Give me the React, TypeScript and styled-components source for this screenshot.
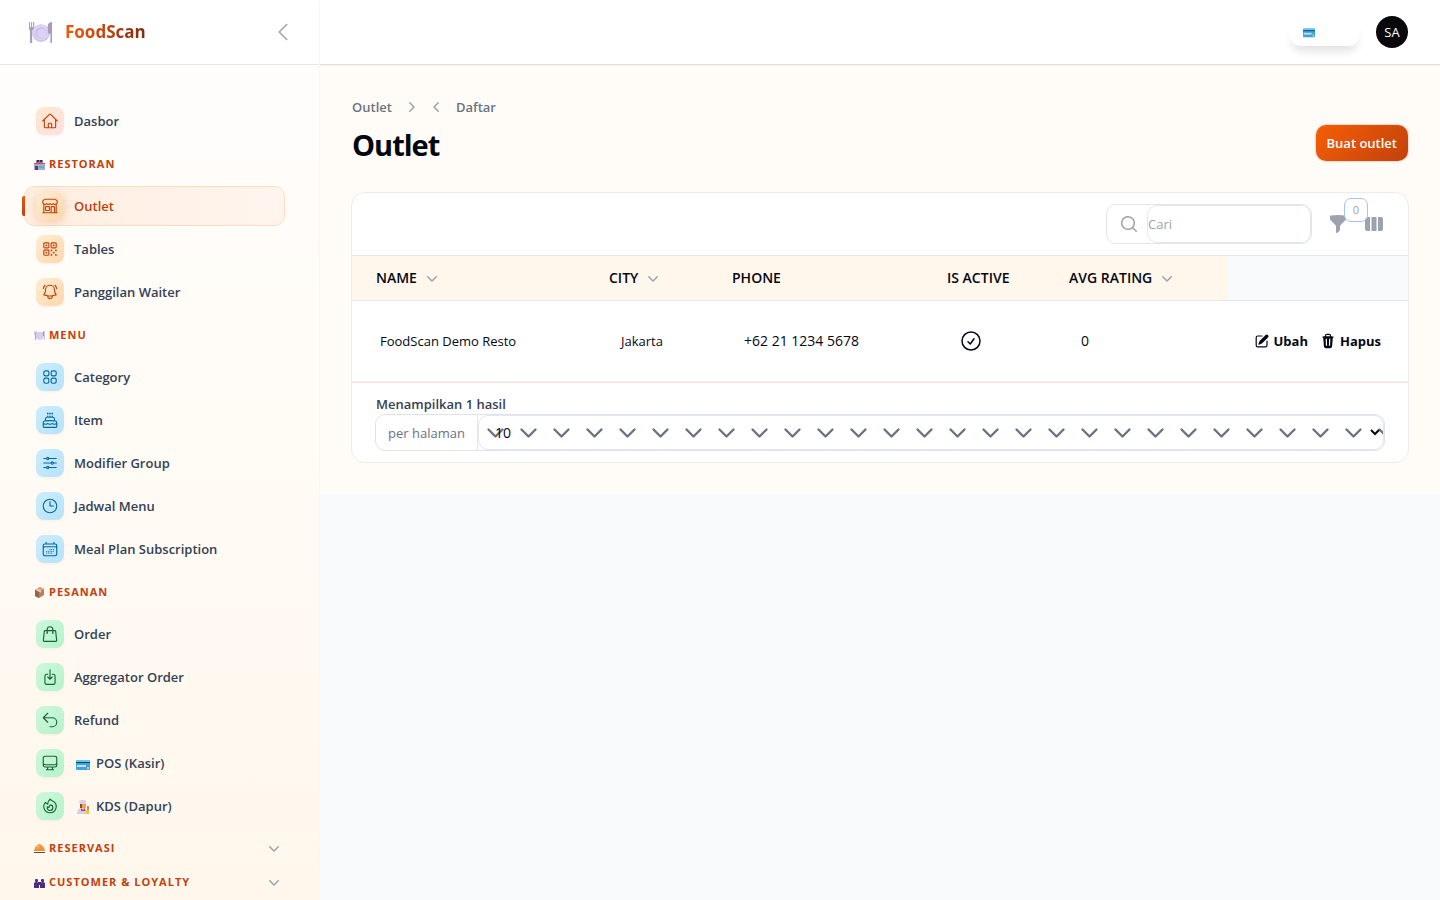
import React from "react";
import styled, { createGlobalStyle, css } from "styled-components";
import {
  HiOutlineHome,
  HiOutlineBuildingStorefront,
  HiOutlineQrCode,
  HiOutlineBellAlert,
  HiOutlineSquares2X2,
  HiOutlineCake,
  HiOutlineAdjustmentsHorizontal,
  HiOutlineClock,
  HiOutlineCalendarDays,
  HiOutlineShoppingBag,
  HiOutlineArrowDownOnSquare,
  HiOutlineArrowUturnLeft,
  HiOutlineComputerDesktop,
  HiOutlineFire,
  HiOutlineChevronLeft,
  HiOutlineCheckCircle,
  HiMiniChevronDown,
  HiMiniChevronLeft,
  HiMiniChevronRight,
  HiMiniMagnifyingGlass,
  HiMiniFunnel,
  HiMiniViewColumns,
  HiMiniPencilSquare,
  HiMiniTrash,
} from "react-icons/hi2";

const GlobalStyle = createGlobalStyle`
  *, *::before, *::after { box-sizing: border-box; }
  body {
    margin: 0;
    background: #f9fafb;
    color: #030712;
    font-family: "Open Sans", "Noto Sans", sans-serif;
    font-size: 13px;
    line-height: 20px;
  }
  button, input, select { font: inherit; color: inherit; }
  button { cursor: pointer; }
  h1, ul, p { margin: 0; padding: 0; }
  svg { display: block; flex: none; }
`;

/* ---------- Emoji drawings ---------- */

const PlateEmoji = ({ size }: { size: number }) => (
  <svg width={size} height={size} viewBox="0 0 24 24" aria-hidden="true">
    <path d="M1 2v6q0 2 1 2v12h2V10q2 0 2-2V2H5v5H4V2H3v5H2V2z" fill="#a79bb5" />
    <circle cx="12.500" cy="12.500" r="8.500" fill="#cdc2ec" />
    <circle cx="12.500" cy="12" r="7.500" fill="#ded5f5" />
    <circle cx="12.500" cy="12.500" r="5.500" fill="#c9bde8" />
    <circle cx="13" cy="13" r="4.500" fill="#dcd2f4" />
    <path d="M21.500 22V13H19V5q1-3 4-3v20z" fill="#a79bb5" />
  </svg>
);

const StoreEmoji = () => (
  <svg width="11" height="11" viewBox="0 0 11 11" aria-hidden="true">
    <rect x="2" y="1" width="7" height="4" fill="#857f9c" />
    <rect x="3" y="1" width="2" height="2" fill="#33304c" />
    <rect x="6" y="1" width="2" height="2" fill="#33304c" />
    <rect x="0" y="4" width="11" height="7" fill="#b3a8bd" />
    <rect x="0" y="4" width="11" height="1" fill="#d4476d" />
    <rect x="1" y="7" width="3" height="4" fill="#3a4a86" />
    <rect x="5" y="7" width="5" height="2" fill="#39bdf0" />
  </svg>
);

const BoxEmoji = () => (
  <svg width="11" height="11" viewBox="0 0 11 11" aria-hidden="true">
    <path d="M1 3l5-3 4 2v6l-5 3-4-2z" fill="#b87f5a" />
    <path d="M1 3l5-3 4 2-5 3z" fill="#d9a883" />
    <path d="M1 3l4 2v6L1 9z" fill="#94644e" />
    <path d="M3 2l4 2v2L6 5 2 3z" fill="#e9d3c5" />
  </svg>
);

const CardEmoji = ({ size = 14 }: { size?: number }) => (
  <svg width={size} height={size} viewBox="0 0 14 14" aria-hidden="true">
    <rect x="0" y="3" width="14" height="10" rx="1" fill="#35a8e4" />
    <rect x="0" y="3" width="14" height="2" fill="#5cc8f4" />
    <rect x="0" y="5" width="14" height="1" fill="#243a52" />
    <rect x="1" y="8" width="9" height="2" fill="#d5dbe8" />
    <rect x="11" y="10" width="2" height="2" fill="#f7c843" />
  </svg>
);

const CookEmoji = () => (
  <svg width="14" height="14" viewBox="0 0 14 14" aria-hidden="true">
    <path d="M3 2q0-2 3-2h2q3 0 2 3v2H4z" fill="#dccfe6" />
    <path d="M4 4h6v4H4z" fill="#f4a63a" />
    <path d="M4 4h2v4H4z" fill="#8a4b3c" />
    <path d="M1 14q0-5 4-6h3q3 1 3 6z" fill="#d7cbea" />
    <path d="M5 8l2 2 2-2v3H5z" fill="#d2365c" />
    <rect x="11" y="6" width="2" height="4" fill="#b98d78" />
    <rect x="10" y="10" width="3" height="4" fill="#f9c433" />
  </svg>
);

const BellhopEmoji = () => (
  <svg width="11" height="11" viewBox="0 0 11 11" aria-hidden="true">
    <path d="M0 8q1-5 4-6l1-1h1l1 1q3 1 4 6z" fill="#f59331" />
    <path d="M3 6q0-3 3-3" stroke="#ffc870" fill="none" />
    <rect x="0" y="9" width="11" height="1" fill="#6b4652" />
  </svg>
);

const PeopleEmoji = () => (
  <svg width="11" height="11" viewBox="0 0 11 11" aria-hidden="true">
    <rect x="1" y="2" width="3" height="3" rx="1" fill="#4b2e83" />
    <rect x="7" y="2" width="3" height="3" rx="1" fill="#4b2e83" />
    <path d="M0 11V6q2-2 5 0h1q3-2 5 0v5H6V8H5v3z" fill="#4b2e83" />
    <rect x="4" y="5" width="3" height="2" fill="#4b2e83" />
  </svg>
);

/* ---------- Shell ---------- */

const Shell = styled.div`
  display: flex;
  align-items: flex-start;
`;

const Sidebar = styled.aside`
  flex: none;
  width: 320px;
  height: 100vh;
  overflow: hidden;
  background: linear-gradient(180deg, #fffefd 0%, #fffbf5 50%, #fff7ec 100%);
  border-right: 1px solid #fdf6ec;
`;

const SidebarHeader = styled.header`
  display: flex;
  align-items: center;
  justify-content: space-between;
  height: 65px;
  padding: 0 24px 0 28px;
  background: #fff;
  border-bottom: 1px solid #e6e7ea;
`;

const Brand = styled.a`
  display: flex;
  align-items: center;
  gap: 12px;
  font-size: 17px;
  line-height: 28px;
  font-weight: 700;
  text-decoration: none;
  color: #c2410c;
`;

const BrandName = styled.span`
  background: linear-gradient(90deg, #f55a05, #c2410c 50%, #7c2d12);
  background-clip: text;
  color: transparent;
`;

const PlainButton = styled.button`
  display: flex;
  align-items: center;
  justify-content: center;
  padding: 0;
  border: 0;
  background: none;
  color: #9ca3af;
`;

const Nav = styled.nav`
  padding: 36px 34px 0 24px;
`;

const NavList = styled.ul`
  display: flex;
  flex-direction: column;
  gap: 3px;
  list-style: none;
`;

type Tone = "home" | "orange" | "blue" | "green";

const tones: Record<Tone, ReturnType<typeof css>> = {
  home: css`
    background: linear-gradient(135deg, #ffe8cf, #ffdfdf);
    color: #c2410c;
  `,
  orange: css`
    background: linear-gradient(135deg, #ffedd5, #fed7aa);
    color: #c2410c;
  `,
  blue: css`
    background: linear-gradient(135deg, #cdecfd, #b6e3fb);
    color: #0369a1;
  `,
  green: css`
    background: linear-gradient(135deg, #cdf8dc, #b6f2cb);
    color: #166534;
  `,
};

const IconTile = styled.span<{ $tone: Tone; $active?: boolean }>`
  display: flex;
  align-items: center;
  justify-content: center;
  width: 28px;
  height: 28px;
  border-radius: 8px;
  box-shadow: ${(p) =>
    p.$active ? "0 2px 8px rgba(234, 88, 12, 0.25)" : "0 1px 2px rgba(234, 88, 12, 0.08)"};
  ${(p) => tones[p.$tone]}
`;

const NavLink = styled.a<{ $active?: boolean }>`
  position: relative;
  display: flex;
  align-items: center;
  gap: 10px;
  height: 40px;
  padding: 0 11px;
  border: 1px solid ${(p) => (p.$active ? "#fddcc0" : "transparent")};
  border-radius: 10px;
  background: ${(p) => (p.$active ? "linear-gradient(90deg, #ffeee0, #fff5ee)" : "none")};
  color: ${(p) => (p.$active ? "#c2410c" : "#334155")};
  font-weight: 600;
  text-decoration: none;

  &::before {
    content: "";
    display: ${(p) => (p.$active ? "block" : "none")};
    position: absolute;
    left: -3px;
    top: 9px;
    width: 3px;
    height: 20px;
    border-radius: 2px 0 0 2px;
    background: linear-gradient(180deg, #ea580c, #c2410c);
  }
`;

const NavText = styled.span`
  display: flex;
  align-items: center;
  gap: 6px;
`;

const EmojiSlot = styled.span`
  padding: 1px 0 0 2px;
`;

const GroupButton = styled.button<{ $collapsed?: boolean }>`
  display: flex;
  align-items: center;
  width: 100%;
  height: 34px;
  margin: ${(p) => (p.$collapsed ? "0" : "6px 0 5px")};
  padding: 0 1px 0 10px;
  border: 0;
  background: none;
  color: #c2410c;
  font-size: 11px;
  line-height: 16px;
  font-weight: 700;
  letter-spacing: 1px;
  text-transform: uppercase;
`;

const CollapsedGroups = styled.div`
  padding-top: 5px;
`;

const GroupLabel = styled.span`
  flex: 1;
  padding-left: 4px;
  text-align: left;
`;

const MutedIcon = styled.span`
  color: #9ca3af;
`;

interface NavEntry {
  label: string;
  icon: React.ComponentType<{ size?: number }>;
  emoji?: React.ReactNode;
  active?: boolean;
}

interface NavGroup {
  title: string;
  emoji: React.ReactNode;
  tone: Tone;
  items: NavEntry[];
}

const groups: NavGroup[] = [
  {
    title: "Restoran",
    emoji: <StoreEmoji />,
    tone: "orange",
    items: [
      { label: "Outlet", icon: HiOutlineBuildingStorefront, active: true },
      { label: "Tables", icon: HiOutlineQrCode },
      { label: "Panggilan Waiter", icon: HiOutlineBellAlert },
    ],
  },
  {
    title: "Menu",
    emoji: <PlateEmoji size={11} />,
    tone: "blue",
    items: [
      { label: "Category", icon: HiOutlineSquares2X2 },
      { label: "Item", icon: HiOutlineCake },
      { label: "Modifier Group", icon: HiOutlineAdjustmentsHorizontal },
      { label: "Jadwal Menu", icon: HiOutlineClock },
      { label: "Meal Plan Subscription", icon: HiOutlineCalendarDays },
    ],
  },
  {
    title: "Pesanan",
    emoji: <BoxEmoji />,
    tone: "green",
    items: [
      { label: "Order", icon: HiOutlineShoppingBag },
      { label: "Aggregator Order", icon: HiOutlineArrowDownOnSquare },
      { label: "Refund", icon: HiOutlineArrowUturnLeft },
      { label: "POS (Kasir)", icon: HiOutlineComputerDesktop, emoji: <CardEmoji /> },
      { label: "KDS (Dapur)", icon: HiOutlineFire, emoji: <CookEmoji /> },
    ],
  },
];

const collapsedGroups = [
  { title: "Reservasi", emoji: <BellhopEmoji /> },
  { title: "Customer & Loyalty", emoji: <PeopleEmoji /> },
];

function NavItem({ entry, tone }: { entry: NavEntry; tone: Tone }) {
  const Icon = entry.icon;
  return (
    <li>
      <NavLink href="#" $active={entry.active} aria-current={entry.active ? "page" : undefined}>
        <IconTile $tone={tone} $active={entry.active}>
          <Icon size={18} />
        </IconTile>
        <NavText>
          {entry.emoji && <EmojiSlot>{entry.emoji}</EmojiSlot>}
          {entry.label}
        </NavText>
      </NavLink>
    </li>
  );
}

/* ---------- Content ---------- */

const Page = styled.div`
  flex: 1;
  min-width: 0;
`;

const Topbar = styled.header`
  position: relative;
  display: flex;
  align-items: center;
  justify-content: flex-end;
  gap: 16px;
  height: 65px;
  padding: 0 32px;
  background: #fff;
  border-bottom: 1px solid #ecdcd2;
  box-shadow: 0 1px 1px rgba(0, 0, 0, 0.04);
`;

const PosButton = styled.button`
  display: flex;
  align-items: center;
  width: 71px;
  height: 28px;
  padding: 0 14px;
  border: 0;
  border-radius: 12px;
  background: #fff;
  box-shadow: 0 8px 10px -3px rgba(0, 0, 0, 0.12);
`;

const Avatar = styled.button`
  width: 32px;
  height: 32px;
  padding: 0;
  border: 0;
  border-radius: 50%;
  background: #09090b;
  color: #fff;
`;

const Main = styled.main`
  padding: 32px 32px 30px;
  background: #fffcf7;
`;

const PageHeader = styled.div`
  display: flex;
  align-items: flex-end;
  justify-content: space-between;
  margin-bottom: 29px;
`;

const Breadcrumb = styled.nav`
  display: flex;
  align-items: center;
  gap: 9px;
  margin-bottom: 10px;
  color: #9ca3af;
`;

const CrumbLink = styled.a`
  color: #6b7280;
  font-weight: 600;
  text-decoration: none;
`;

const Chevrons = styled.span`
  display: flex;
  gap: 6px;
`;

const Title = styled.h1`
  font-size: 29px;
  line-height: 36px;
  font-weight: 700;
  letter-spacing: -1px;
`;

const PrimaryButton = styled.button`
  height: 36px;
  margin-bottom: 2px;
  padding: 0 11px;
  border: 0;
  border-radius: 10px;
  background: linear-gradient(135deg, #f55f05, #c2410c);
  box-shadow: 0 0 2px rgba(194, 65, 12, 0.6);
  color: #fff;
  font-weight: 600;
`;

const Card = styled.section`
  border: 1px solid #ececec;
  border-radius: 14px;
  background: #fff;
  margin: 0 -1px;
`;

const Toolbar = styled.div`
  display: flex;
  align-items: center;
  justify-content: flex-end;
  gap: 16px;
  height: 62px;
  padding: 0 24px;
`;

const SearchBox = styled.label`
  display: flex;
  align-items: center;
  width: 206px;
  height: 40px;
  padding: 0 0 0 12px;
  border: 1px solid #e2e5ea;
  border-radius: 10px;
  color: #9ca3af;
`;

const SearchInput = styled.input`
  flex: 1;
  min-width: 0;
  height: 38px;
  margin-left: 8px;
  padding: 0;
  border: 1px solid #e2e8f0;
  border-radius: 10px;
  background: #fff;
  outline: 0;

  &::placeholder {
    color: #9ca3af;
    opacity: 1;
  }
`;

const FilterButton = styled(PlainButton)`
  position: relative;
  width: 20px;
  height: 20px;
`;

const FilterCount = styled.span`
  position: absolute;
  left: 16px;
  top: -16px;
  width: 24px;
  height: 24px;
  border: 1px solid #a3c4fb;
  border-radius: 7px;
  background: #fff;
  font-size: 11px;
  line-height: 22px;
  text-align: center;
`;

const DataTable = styled.table`
  width: 100%;
  table-layout: fixed;
  border-collapse: separate;
  border-spacing: 0;
`;

const HeadCell = styled.th<{ $plain?: boolean }>`
  height: 46px;
  padding: 0 12px;
  border-top: 1px solid #e5e7eb;
  border-bottom: 1px solid #e5e7eb;
  background: ${(p) => (p.$plain ? "#f8fafc" : "#fff7eb")};
  font-size: 14px;
  font-weight: 600;
  text-align: left;
  text-transform: uppercase;
  white-space: nowrap;

  &:first-child {
    padding-left: 24px;
  }
`;

const SortButton = styled.button`
  display: flex;
  align-items: center;
  gap: 5px;
  padding: 0;
  border: 0;
  background: none;
  font-weight: 600;
  text-transform: uppercase;
`;

const Cell = styled.td<{ $numeric?: boolean }>`
  height: 81px;
  padding: 0 24px;
  border-bottom: 1px solid #fdf0e2;
  font-size: ${(p) => (p.$numeric ? "14px" : "13px")};
  white-space: nowrap;

  &:first-child {
    padding-left: 28px;
  }
`;

const RowActions = styled.div`
  display: flex;
  justify-content: flex-end;
  gap: 12px;
  padding-right: 3px;
`;

const ActionLink = styled.button`
  display: flex;
  align-items: center;
  gap: 4px;
  padding: 0;
  border: 0;
  background: none;
  font-weight: 700;
`;

const Footer = styled.div`
  padding: 11px 23px;
  border-top: 1px solid #e5e7eb;
`;

const Summary = styled.p`
  color: #374151;
  font-weight: 600;
  padding-left: 1px;
`;

const PerPage = styled.div`
  display: flex;
  height: 37px;
  border: 1px solid #e0e3e8;
  border-radius: 10px;
`;

const PerPageLabel = styled.label`
  display: flex;
  align-items: center;
  padding: 0 12px;
  border-right: 1px solid #e5e7eb;
  color: #6b7280;
`;

const chevronTile =
  "url(\"data:image/svg+xml,%3Csvg xmlns='http://www.w3.org/2000/svg' width='33' height='24' viewBox='0 0 33 24'%3E%3Cpath d='M9.500 8.500l7 7 7-7' fill='none' stroke='%236b7280' stroke-width='2.400' stroke-linecap='round' stroke-linejoin='round'/%3E%3C/svg%3E\")";

const PerPageSelect = styled.select`
  flex: 1;
  min-width: 0;
  padding: 0 0 0 12px;
  border: 1px solid #e2e8f0;
  border-radius: 10px;
  background: #fff ${chevronTile} 0 50% repeat-x;
  font-size: 14px;
  outline: 0;
`;

const columns = [
  { title: "Name", width: 245, sortable: true },
  { title: "City", width: 123, sortable: true },
  { title: "Phone", width: 215 },
  { title: "Is Active", width: 122 },
  { title: "Avg Rating", width: 171, sortable: true },
  { title: "", width: 180 },
];

export default function App() {
  return (
    <>
      <GlobalStyle />
      <Shell>
        <Sidebar>
          <SidebarHeader>
            <Brand href="#">
              <PlateEmoji size={25} />
              <BrandName>FoodScan</BrandName>
            </Brand>
            <PlainButton type="button" aria-label="Collapse sidebar">
              <HiOutlineChevronLeft size={24} />
            </PlainButton>
          </SidebarHeader>
          <Nav aria-label="Sidebar">
            <NavList>
              <NavItem entry={{ label: "Dasbor", icon: HiOutlineHome }} tone="home" />
            </NavList>
            {groups.map((group) => (
              <React.Fragment key={group.title}>
                <GroupButton type="button" aria-expanded="true">
                  {group.emoji}
                  <GroupLabel>{group.title}</GroupLabel>
                </GroupButton>
                <NavList>
                  {group.items.map((entry) => (
                    <NavItem key={entry.label} entry={entry} tone={group.tone} />
                  ))}
                </NavList>
              </React.Fragment>
            ))}
            <CollapsedGroups>
              {collapsedGroups.map((group) => (
                <GroupButton key={group.title} type="button" aria-expanded="false" $collapsed>
                  {group.emoji}
                  <GroupLabel>{group.title}</GroupLabel>
                  <MutedIcon>
                    <HiMiniChevronDown size={20} />
                  </MutedIcon>
                </GroupButton>
              ))}
            </CollapsedGroups>
          </Nav>
        </Sidebar>

        <Page>
          <Topbar>
            <PosButton type="button" aria-label="POS">
              <CardEmoji size={12} />
            </PosButton>
            <Avatar type="button">SA</Avatar>
          </Topbar>
          <Main>
            <PageHeader>
              <div>
                <Breadcrumb aria-label="Breadcrumb">
                  <CrumbLink href="#">Outlet</CrumbLink>
                  <Chevrons>
                    <HiMiniChevronRight size={20} />
                    <HiMiniChevronLeft size={20} />
                  </Chevrons>
                  <CrumbLink href="#">Daftar</CrumbLink>
                </Breadcrumb>
                <Title>Outlet</Title>
              </div>
              <PrimaryButton type="button">Buat outlet</PrimaryButton>
            </PageHeader>

            <Card>
              <Toolbar>
                <SearchBox>
                  <HiMiniMagnifyingGlass size={20} />
                  <SearchInput type="search" placeholder="Cari" aria-label="Cari" />
                </SearchBox>
                <FilterButton type="button" aria-label="Filter">
                  <HiMiniFunnel size={20} />
                  <FilterCount>0</FilterCount>
                </FilterButton>
                <PlainButton type="button" aria-label="Columns">
                  <HiMiniViewColumns size={20} />
                </PlainButton>
              </Toolbar>
              <DataTable>
                <colgroup>
                  {columns.map((c) => (
                    <col key={c.title} width={c.width} />
                  ))}
                </colgroup>
                <thead>
                  <tr>
                    {columns.map((c) => (
                      <HeadCell key={c.title} scope="col" $plain={!c.title}>
                        {c.sortable ? (
                          <SortButton type="button">
                            {c.title}
                            <MutedIcon>
                              <HiMiniChevronDown size={20} />
                            </MutedIcon>
                          </SortButton>
                        ) : (
                          c.title
                        )}
                      </HeadCell>
                    ))}
                  </tr>
                </thead>
                <tbody>
                  <tr>
                    <Cell>FoodScan Demo Resto</Cell>
                    <Cell>Jakarta</Cell>
                    <Cell $numeric>+62 21 1234 5678</Cell>
                    <Cell>
                      <HiOutlineCheckCircle size={24} aria-label="Active" />
                    </Cell>
                    <Cell $numeric>0</Cell>
                    <Cell>
                      <RowActions>
                        <ActionLink type="button">
                          <HiMiniPencilSquare size={16} />
                          Ubah
                        </ActionLink>
                        <ActionLink type="button">
                          <HiMiniTrash size={16} />
                          Hapus
                        </ActionLink>
                      </RowActions>
                    </Cell>
                  </tr>
                </tbody>
              </DataTable>
              <Footer>
                <Summary>Menampilkan 1 hasil</Summary>
                <PerPage>
                  <PerPageLabel htmlFor="per-page">per halaman</PerPageLabel>
                  <PerPageSelect id="per-page" defaultValue="10">
                    <option>5</option>
                    <option>10</option>
                    <option>25</option>
                    <option>50</option>
                  </PerPageSelect>
                </PerPage>
              </Footer>
            </Card>
          </Main>
        </Page>
      </Shell>
    </>
  );
}
